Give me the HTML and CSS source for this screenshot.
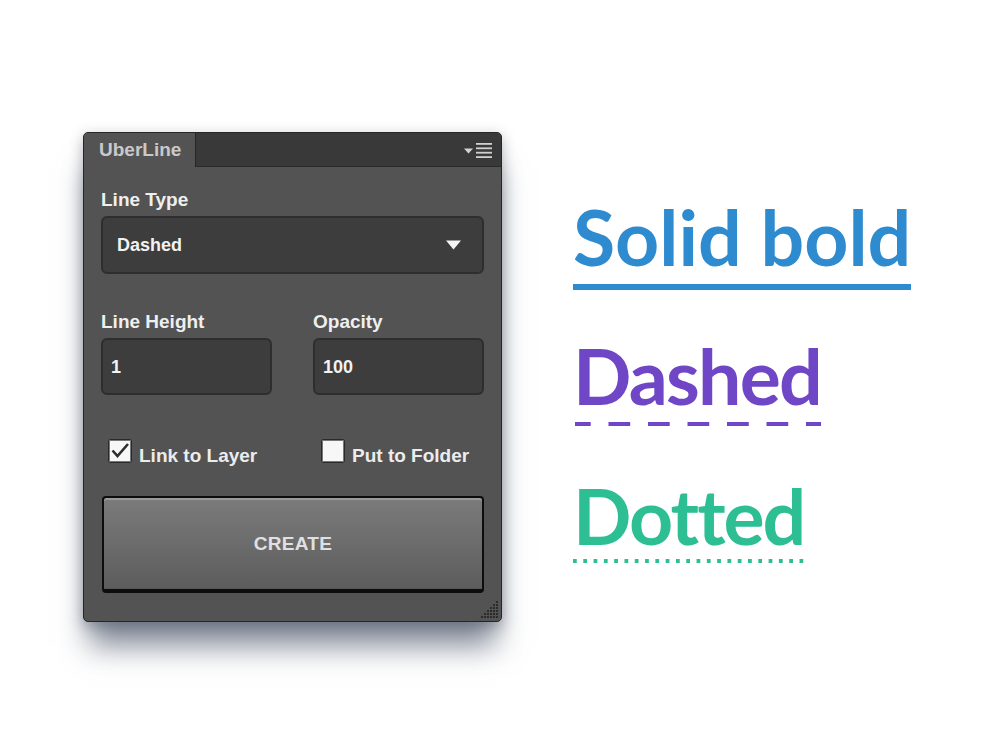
FILE: index.html
```html
<!DOCTYPE html>
<html>
<head>
<meta charset="utf-8">
<title>UberLine</title>
<link rel="stylesheet" href="styles.css">
</head>
<body>
<div class="page">
  <div class="panel">
    <div class="header">
      <div class="tab">UberLine</div>
      <div class="strip">
        <svg class="menu-icon" width="29" height="16" viewBox="0 0 29 16">
          <polygon points="0,5.5 9,5.5 4.5,10.5" fill="#d4d4d4"/>
          <rect x="12" y="0" width="16" height="1.8" fill="#cfcfcf"/>
          <rect x="12" y="4.4" width="16" height="1.8" fill="#cfcfcf"/>
          <rect x="12" y="8.8" width="16" height="1.8" fill="#cfcfcf"/>
          <rect x="12" y="13.2" width="16" height="1.8" fill="#cfcfcf"/>
        </svg>
      </div>
    </div>
    <div class="body">
      <div class="label">Line Type</div>
      <div class="select">
        <span class="value">Dashed</span>
        <svg class="arrow" width="15" height="10" viewBox="0 0 15 10"><polygon points="0,0.5 15,0.5 7.5,9.5" fill="#f4f4f4"/></svg>
      </div>
      <div class="pair">
        <div class="field">
          <div class="label">Line Height</div>
          <div class="input"><span class="value">1</span></div>
        </div>
        <div class="field">
          <div class="label">Opacity</div>
          <div class="input"><span class="value">100</span></div>
        </div>
      </div>
      <div class="checks">
        <div class="check">
          <span class="box">
            <svg width="22" height="22" viewBox="0 0 22 22"><polyline points="3.5,10.5 8.5,16 19,4" fill="none" stroke="#2e2e2e" stroke-width="2.6"/></svg>
          </span>
          <span class="check-text">Link to Layer</span>
        </div>
        <div class="check">
          <span class="box"></span>
          <span class="check-text">Put to Folder</span>
        </div>
      </div>
      <button class="create">CREATE</button>
    </div>
    <svg class="grip" width="20" height="20" viewBox="0 0 20 20">
      <g fill="#2c2c2c">
        <rect x="17" y="2" width="2" height="2"/>
        <rect x="14" y="5" width="2" height="2"/><rect x="17" y="5" width="2" height="2"/>
        <rect x="11" y="8" width="2" height="2"/><rect x="14" y="8" width="2" height="2"/><rect x="17" y="8" width="2" height="2"/>
        <rect x="8" y="11" width="2" height="2"/><rect x="11" y="11" width="2" height="2"/><rect x="14" y="11" width="2" height="2"/><rect x="17" y="11" width="2" height="2"/>
        <rect x="5" y="14" width="2" height="2"/><rect x="8" y="14" width="2" height="2"/><rect x="11" y="14" width="2" height="2"/><rect x="14" y="14" width="2" height="2"/><rect x="17" y="14" width="2" height="2"/>
        <rect x="2" y="17" width="2" height="2"/><rect x="5" y="17" width="2" height="2"/><rect x="8" y="17" width="2" height="2"/><rect x="11" y="17" width="2" height="2"/><rect x="14" y="17" width="2" height="2"/><rect x="17" y="17" width="2" height="2"/>
      </g>
    </svg>
  </div>
  <div class="samples">
    <div class="sample solid">
      <div class="word">Solid bold</div>
      <div class="rule"></div>
    </div>
    <div class="sample dashed">
      <div class="word">Dashed</div>
      <div class="rule"></div>
    </div>
    <div class="sample dotted">
      <div class="word">Dotted</div>
      <div class="rule"></div>
    </div>
  </div>
</div>
</body>
</html>
```

FILE: styles.css
```css
html, body {
  margin: 0;
  padding: 0;
  background: #ffffff;
}

.page {
  display: flex;
  align-items: flex-start;
  min-height: 754px;
  box-sizing: border-box;
  padding: 132px 0 0 83px;
  font-family: "Liberation Sans", Arial, sans-serif;
}

/* ---------- Panel ---------- */
.panel {
  position: relative;
  flex: none;
  width: 417px;
  height: 488px;
  background: #535353;
  border: 1px solid #262626;
  border-radius: 5px;
  box-shadow: 0 30px 28px -6px rgba(55, 66, 88, 0.62), 0 4px 14px rgba(40, 48, 62, 0.35);
}

.header {
  display: flex;
  height: 34px;
}

.tab {
  width: 96px;
  padding-left: 15px;
  background: #535353;
  border-right: 1px solid #262626;
  border-top-left-radius: 4px;
  color: #c9c9c9;
  font-weight: bold;
  font-size: 19px;
  line-height: 34px;
}

.strip {
  flex: 1;
  display: flex;
  justify-content: flex-end;
  align-items: flex-start;
  padding: 10px 8px 0 0;
  background: #393939;
  border-bottom: 1px solid #2a2a2a;
  border-top-right-radius: 4px;
  box-sizing: border-box;
}

.body {
  display: flex;
  flex-direction: column;
  padding: 22px 17px 0 17px;
}

.label {
  color: #efefef;
  font-weight: bold;
  font-size: 19px;
  line-height: 22px;
  height: 22px;
}

.select {
  display: flex;
  align-items: center;
  justify-content: space-between;
  box-sizing: border-box;
  height: 58px;
  margin-top: 5px;
  padding: 0 21px 0 14px;
  background: #3d3d3d;
  border: 2px solid #2e2e2e;
  border-radius: 6px;
}

.value {
  color: #f2f2f2;
  font-weight: bold;
  font-size: 18px;
  line-height: 22px;
}

.pair {
  display: grid;
  grid-template-columns: 171px 171px;
  column-gap: 41px;
  margin-top: 37px;
}

.field {
  display: flex;
  flex-direction: column;
}

.input {
  display: flex;
  align-items: center;
  box-sizing: border-box;
  height: 57px;
  margin-top: 5px;
  padding-left: 8px;
  background: #3d3d3d;
  border: 2px solid #2e2e2e;
  border-radius: 6px;
}

.checks {
  display: grid;
  grid-template-columns: 171px 171px;
  column-gap: 41px;
  margin-top: 44px;
}

.check {
  display: flex;
  align-items: flex-end;
  padding-left: 7px;
}

.checks .check:nth-child(2) {
  padding-left: 8px;
}

.box {
  display: flex;
  box-sizing: border-box;
  width: 24px;
  height: 24px;
  background: #f7f7f7;
  border: 1px solid #2a2a2a;
  border-radius: 2px;
  box-shadow: inset 0 0 0 1px #777;
}

.box svg {
  display: block;
}

.check-text {
  margin-left: 7px;
  color: #ececec;
  font-weight: bold;
  font-size: 19px;
  line-height: 19px;
  margin-bottom: -2px;
}

.create {
  display: block;
  box-sizing: border-box;
  height: 97px;
  margin-top: 33px;
  margin-left: 1px;
  padding: 0;
  background: linear-gradient(to bottom, #7b7b7b 0%, #6c6c6c 50%, #5c5c5c 100%);
  border: 2px solid #0d0d0d;
  border-bottom-width: 4px;
  border-radius: 4px;
  box-shadow: inset 0 2px 0 #9a9a9a, inset 0 -1px 0 #555;
  color: #e0e0e0;
  font-family: "Liberation Sans", Arial, sans-serif;
  font-weight: bold;
  font-size: 19px;
  letter-spacing: 0.3px;
}

.grip {
  position: absolute;
  right: 2px;
  bottom: 2px;
}

/* ---------- Samples ---------- */
.samples {
  display: flex;
  flex-direction: column;
  align-items: flex-start;
  margin-left: 71px;
  padding-top: 66px;
  font-family: Lato, "Open Sans", sans-serif;
  font-weight: bold;
}

.sample {
  display: flex;
  flex-direction: column;
}

.word {
  font-size: 77px;
  line-height: 77px;
  height: 77px;
}

.solid {
  color: #2e8bcf;
}

.solid .rule {
  height: 6px;
  margin-top: 9px;
  background: #2e8bcf;
}

.dashed {
  margin-top: 47px;
  color: #6f46c6;
}

.dashed .word {
  letter-spacing: -1.8px;
}

.dashed .rule {
  height: 4px;
  margin: 8px 0 0 2px;
  background-image: linear-gradient(to right, #6f46c6 22px, transparent 22px);
  background-size: 39.5px 4px;
  background-position: -6px 0;
  background-repeat: repeat-x;
}

.dotted {
  margin-top: 51px;
  color: #2dbf93;
}

.dotted .word {
  letter-spacing: -2px;
}

.dotted .rule {
  height: 4px;
  margin-top: 5px;
  background-image: linear-gradient(to right, #2dbf93 4px, transparent 4px);
  background-size: 10.3px 4px;
  background-repeat: repeat-x;
}
```
